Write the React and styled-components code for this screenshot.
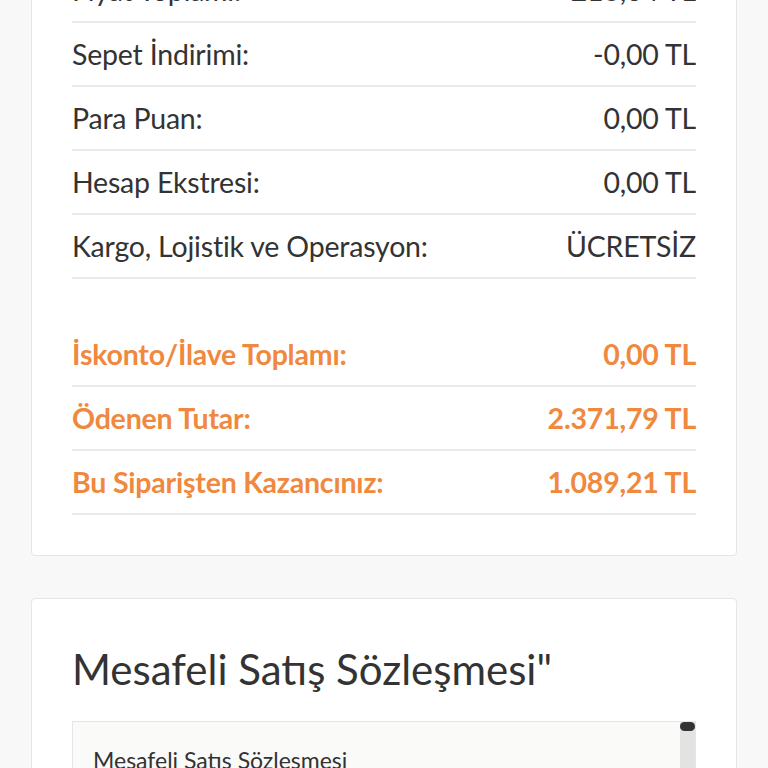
import React from "react";
import styled, { createGlobalStyle } from "styled-components";

const Global = createGlobalStyle`
  html, body { margin: 0; padding: 0; background: #f8f8f8; }
  body { font-family: Lato, "Noto Sans", sans-serif; color: #333; overflow: hidden; }
`;

const Page = styled.div`
  display: flex;
  flex-direction: column;
  gap: 42px;
  padding: 0 31px;
  margin-top: -82px;
`;

const Card = styled.section`
  background: #fff;
  border: 1px solid #e6e6e6;
  border-radius: 4px;
  padding: 40px;
`;

const Group = styled.div`
  display: flex;
  flex-direction: column;
  & + & { margin-top: 44px; }
`;

const Row = styled.div`
  display: flex;
  align-items: center;
  justify-content: space-between;
  height: 62px;
  border-bottom: 2px solid #e9e9e9;
  font-size: 28.5px;
  letter-spacing: -0.2px;
  font-weight: ${(p) => (p.$accent ? 700 : 400)};
  color: ${(p) => (p.$accent ? "#f0883e" : "#333")};
`;

const Title = styled.h2`
  margin: 5px 0 27px;
  font-size: 42px;
  line-height: 50px;
  font-weight: 400;
  color: #333;
`;

const ScrollBox = styled.div`
  display: flex;
  height: 260px;
  border: 1px solid #e6e6e6;
  background: #fafaf9;
  overflow: hidden;
`;

const Doc = styled.div`
  flex: 1;
  padding: 21px 20px;
  font-size: 23px;
  line-height: 1.5;
  color: #333;
`;

const Rail = styled.div`
  flex: 0 0 15px;
  background: #e3e3e3;
  display: flex;
  flex-direction: column;
`;

const Thumb = styled.div`
  height: 9px;
  background: #333;
  border-radius: 5px;
`;

const summary = [
  ["Fiyat Toplamı:", "213,04 TL"],
  ["Sepet İndirimi:", "-0,00 TL"],
  ["Para Puan:", "0,00 TL"],
  ["Hesap Ekstresi:", "0,00 TL"],
  ["Kargo, Lojistik ve Operasyon:", "ÜCRETSİZ"],
];

const totals = [
  ["İskonto/İlave Toplamı:", "0,00 TL"],
  ["Ödenen Tutar:", "2.371,79 TL"],
  ["Bu Siparişten Kazancınız:", "1.089,21 TL"],
];

export default function App() {
  return (
    <>
      <Global />
      <Page>
        <Card>
          <Group>
            {summary.map(([l, v]) => (
              <Row key={l}>
                <span>{l}</span>
                <span>{v}</span>
              </Row>
            ))}
          </Group>
          <Group>
            {totals.map(([l, v]) => (
              <Row key={l} $accent>
                <span>{l}</span>
                <span>{v}</span>
              </Row>
            ))}
          </Group>
        </Card>
        <Card>
          <Title>Mesafeli Satış Sözleşmesi"</Title>
          <ScrollBox>
            <Doc>
              Mesafeli Satıs Sözlesmesi
              <br />
              <br />
              MADDE 1 - TARAFLAR
              <br />
              1.1 - SATICI: Ünvanı, adresi ve iletişim bilgileri aşağıda yer almaktadır.
            </Doc>
            <Rail>
              <Thumb />
            </Rail>
          </ScrollBox>
        </Card>
      </Page>
    </>
  );
}
